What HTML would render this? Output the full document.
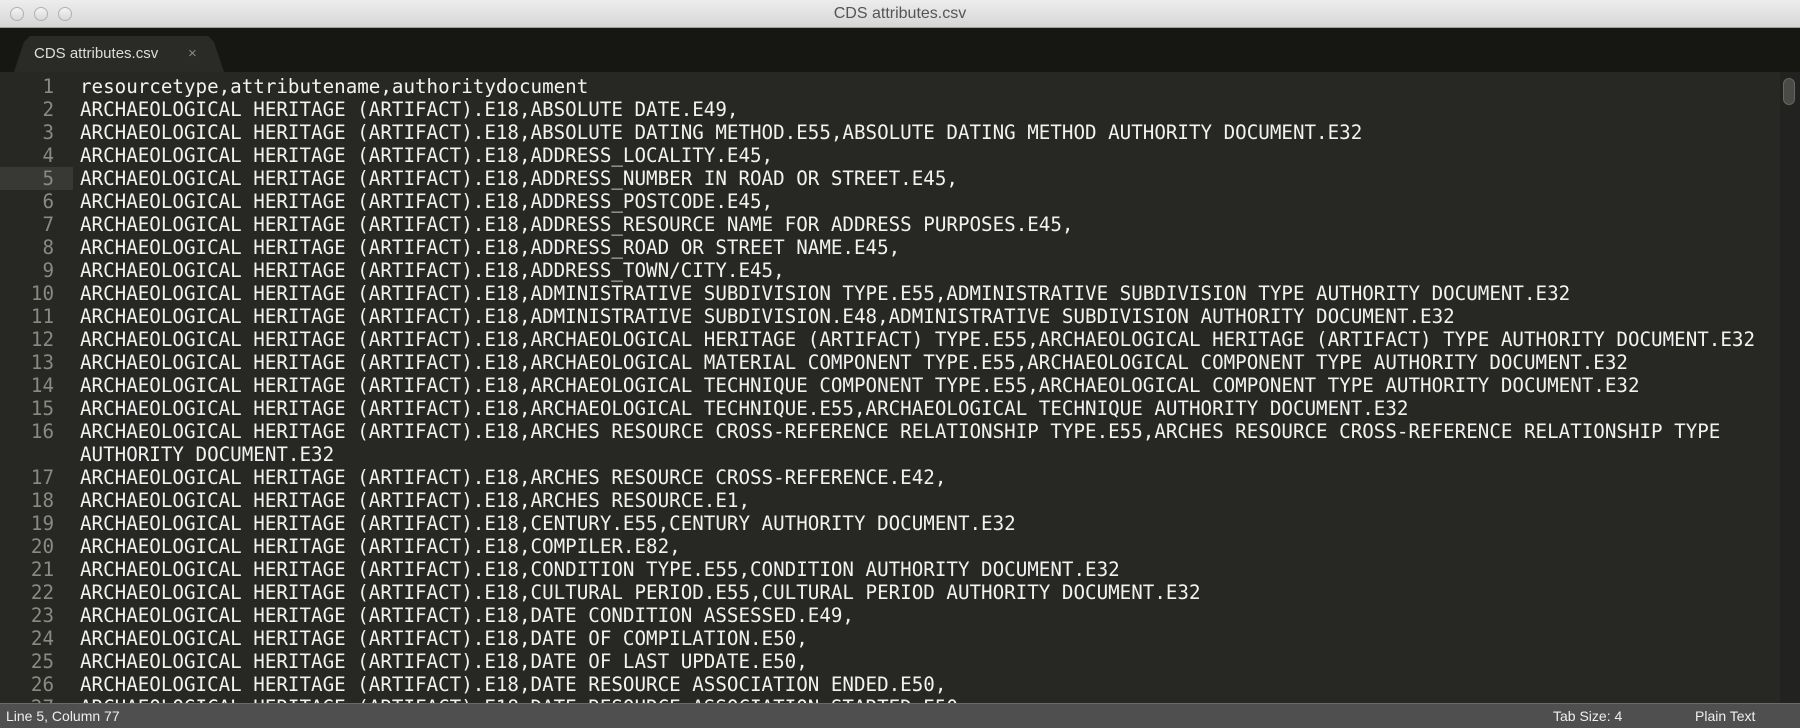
<!DOCTYPE html>
<html><head><meta charset="utf-8"><style>
*{margin:0;padding:0;box-sizing:border-box}
body{width:1800px;height:728px;overflow:hidden;background:#272723;font-family:"Liberation Sans",sans-serif;position:relative}
#title{position:absolute;left:0;top:0;width:1800px;height:28px;background:linear-gradient(#ededed,#d6d6d6);border-bottom:1px solid #a0a0a0;text-align:center;font-size:16px;line-height:28px;color:#555}
.dot{position:absolute;top:7px;width:14px;height:14px;border-radius:50%;border:1px solid #b0b0b0;background:linear-gradient(#f4f4f4,#d8d8d8)}
#tabbar{position:absolute;left:0;top:28px;width:1800px;height:44px;background:#161612}
#tab{position:absolute;left:14px;top:8px;width:210px;height:36px;background:#2a2a26;clip-path:polygon(0 100%,10px 6px,16px 0,194px 0,200px 6px,210px 100%);color:#ddd;font-size:15px;line-height:36px;padding-left:20px}
#tab span{position:absolute;left:174px;color:#888;font-size:15px}
#ed{position:absolute;left:0;top:72px;width:1780px;height:631px;overflow:hidden;font-family:"DejaVu Sans Mono","Liberation Mono",monospace;font-size:19.2px;color:#f2f2f2}
.l{position:absolute;left:80px;height:23px;line-height:23px;white-space:pre}
.n{position:absolute;left:0;width:54px;text-align:right;height:23px;line-height:23px;color:#8a8a85}
#hl{position:absolute;left:0;top:95px;width:73px;height:23px;background:#383834}
#sb{position:absolute;left:1780px;top:72px;width:20px;height:631px;background:#222220}
#thumb{position:absolute;left:1783px;top:78px;width:12px;height:27px;border-radius:6px;background:#4a4a47;border:1px solid #666}
#status{position:absolute;left:0;top:703px;width:1800px;height:25px;background:#4f4f4f;border-top:1px solid #6a6a6a;color:#eee;font-size:14px;line-height:24px}
</style></head><body>
<div id="title"><div class="dot" style="left:10px"></div><div class="dot" style="left:34px"></div><div class="dot" style="left:58px"></div>CDS attributes.csv</div>
<div id="tabbar"><div id="tab">CDS attributes.csv<span>×</span></div></div>
<div id="ed"><div id="hl"></div>
<div id="lines"></div>
</div>
<div id="sb"></div><div id="thumb"></div>
<div id="status"><span style="position:absolute;left:6px">Line 5, Column 77</span><span style="position:absolute;left:1553px">Tab Size: 4</span><span style="position:absolute;left:1695px">Plain Text</span></div>
<script>
var P="ARCHAEOLOGICAL HERITAGE (ARTIFACT).E18,";
var L=["resourcetype,attributename,authoritydocument",
P+"ABSOLUTE DATE.E49,",
P+"ABSOLUTE DATING METHOD.E55,ABSOLUTE DATING METHOD AUTHORITY DOCUMENT.E32",
P+"ADDRESS_LOCALITY.E45,",
P+"ADDRESS_NUMBER IN ROAD OR STREET.E45,",
P+"ADDRESS_POSTCODE.E45,",
P+"ADDRESS_RESOURCE NAME FOR ADDRESS PURPOSES.E45,",
P+"ADDRESS_ROAD OR STREET NAME.E45,",
P+"ADDRESS_TOWN/CITY.E45,",
P+"ADMINISTRATIVE SUBDIVISION TYPE.E55,ADMINISTRATIVE SUBDIVISION TYPE AUTHORITY DOCUMENT.E32",
P+"ADMINISTRATIVE SUBDIVISION.E48,ADMINISTRATIVE SUBDIVISION AUTHORITY DOCUMENT.E32",
P+"ARCHAEOLOGICAL HERITAGE (ARTIFACT) TYPE.E55,ARCHAEOLOGICAL HERITAGE (ARTIFACT) TYPE AUTHORITY DOCUMENT.E32",
P+"ARCHAEOLOGICAL MATERIAL COMPONENT TYPE.E55,ARCHAEOLOGICAL COMPONENT TYPE AUTHORITY DOCUMENT.E32",
P+"ARCHAEOLOGICAL TECHNIQUE COMPONENT TYPE.E55,ARCHAEOLOGICAL COMPONENT TYPE AUTHORITY DOCUMENT.E32",
P+"ARCHAEOLOGICAL TECHNIQUE.E55,ARCHAEOLOGICAL TECHNIQUE AUTHORITY DOCUMENT.E32",
[P+"ARCHES RESOURCE CROSS-REFERENCE RELATIONSHIP TYPE.E55,ARCHES RESOURCE CROSS-REFERENCE RELATIONSHIP TYPE","AUTHORITY DOCUMENT.E32"],
P+"ARCHES RESOURCE CROSS-REFERENCE.E42,",
P+"ARCHES RESOURCE.E1,",
P+"CENTURY.E55,CENTURY AUTHORITY DOCUMENT.E32",
P+"COMPILER.E82,",
P+"CONDITION TYPE.E55,CONDITION AUTHORITY DOCUMENT.E32",
P+"CULTURAL PERIOD.E55,CULTURAL PERIOD AUTHORITY DOCUMENT.E32",
P+"DATE CONDITION ASSESSED.E49,",
P+"DATE OF COMPILATION.E50,",
P+"DATE OF LAST UPDATE.E50,",
P+"DATE RESOURCE ASSOCIATION ENDED.E50,",
P+"DATE RESOURCE ASSOCIATION STARTED.E50,"];
var h="",row=0;
for(var i=0;i<L.length;i++){var t=3+row*23;h+='<div class="n" style="top:'+t+'px">'+(i+1)+'</div>';
var a=Array.isArray(L[i])?L[i]:[L[i]];for(var j=0;j<a.length;j++){h+='<div class="l" style="top:'+(3+row*23)+'px">'+a[j].replace(/&/g,"&amp;")+'</div>';row++;}}
document.getElementById("lines").innerHTML=h;
</script>
</body></html>
